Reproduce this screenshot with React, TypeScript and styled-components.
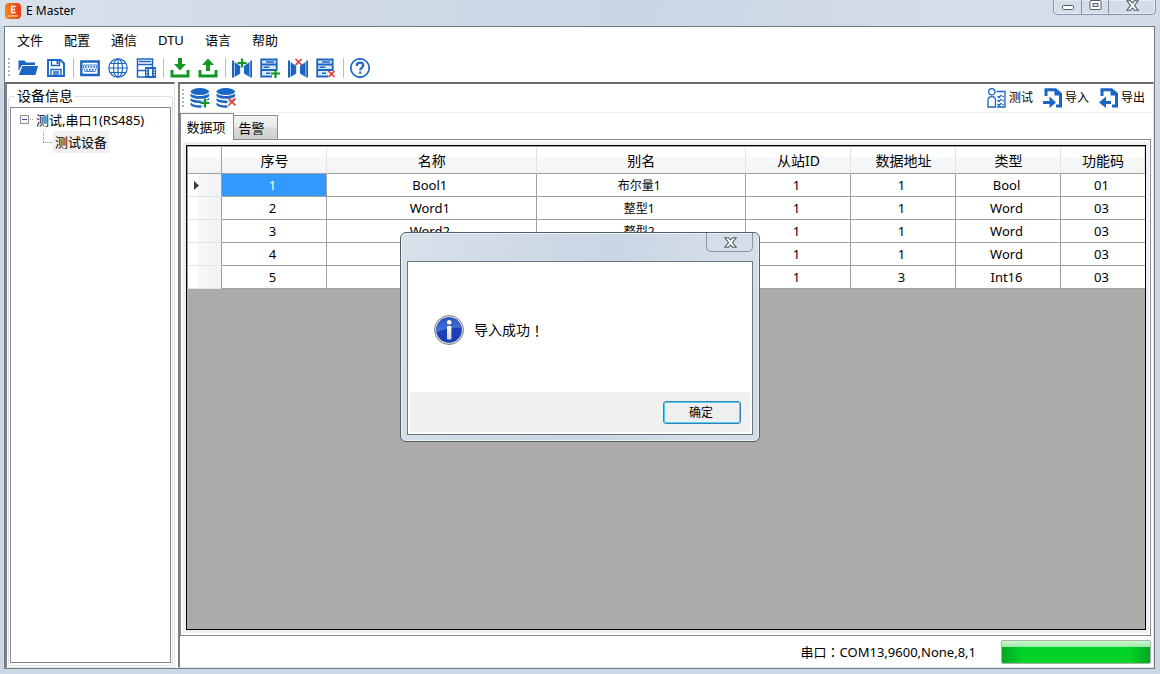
import React from 'react';
import styled, { createGlobalStyle, css } from 'styled-components';

const Global = createGlobalStyle`
  *, *::before, *::after { box-sizing: border-box; }
  body { margin: 0; font: 13px/20px "Noto Sans", "Noto Sans CJK SC", sans-serif; color: #000; }
  button { font: inherit; color: inherit; border: 0; background: none; padding: 0; margin: 0; white-space: nowrap; }
  svg { display: block; }
`;

const BLUE = '#1b66c4';
const GREEN = '#119822';
const RED = '#e8352e';
const GLASS = 'linear-gradient(100deg, #d9e1eb 0%, #cfdae6 30%, #c9d6e4 55%, #d6dee9 85%, #d3dce8 100%)';

const Window = styled.div`
  display: flex;
  flex-direction: column;
  height: 100vh;
  min-height: 480px;
  padding: 0 5px 5px 4px;
  background: #cbd8e6;
`;

const TitleBar = styled.header`
  display: flex;
  flex: none;
  align-items: flex-start;
  height: 26px;
  margin: 0 -5px 0 -4px;
  padding: 0 4px 0 5px;
  background: ${GLASS};
`;

const Title = styled.h1`
  display: flex;
  align-items: center;
  gap: 5px;
  margin: 0;
  font-size: 12px;
  line-height: 22px;
  font-weight: 400;
`;

const WindowButtons = styled.div`
  display: flex;
  margin-left: auto;
  height: 15px;
  border: 1px solid #8a94a3;
  border-top: 0;
  border-radius: 0 0 5px 5px;
  box-shadow: inset 0 0 0 1px #e6ecf3;
`;

const WindowButton = styled.button<{ $wide?: boolean }>`
  display: flex;
  justify-content: center;
  width: ${p => (p.$wide ? 47 : 27)}px;
  & + & { border-left: 1px solid #8a94a3; }
`;

const Client = styled.div`
  display: flex;
  flex-direction: column;
  flex: 1;
  min-height: 0;
  background: #fff;
  border: 1px solid #737b86;
`;

const MenuBar = styled.nav`
  display: flex;
  flex: none;
  gap: 21px;
  height: 26px;
  padding: 0 12px;
  align-items: center;
`;

const ToolStrip = styled.div<{ $compact?: boolean }>`
  display: flex;
  flex: none;
  align-items: center;
  height: ${p => (p.$compact ? 28 : 29)}px;
  padding: 0 ${p => (p.$compact ? 2 : 3)}px;
`;

const Grip = styled.span<{ $tight?: boolean }>`
  width: 2px;
  height: 19px;
  margin-right: ${p => (p.$tight ? 3 : 4)}px;
  background: repeating-linear-gradient(#b5b5b5 0 2px, #fff 2px 4px);
`;

const ToolButton = styled.button<{ $width?: number }>`
  display: grid;
  place-items: center;
  width: ${p => p.$width ?? 28}px;
  height: 24px;
`;

const TextToolButton = styled.button`
  display: flex;
  align-items: center;
  gap: 2px;
  padding: 0 6px 0 4px;
  font-size: 12px;
`;

const Spacer = styled.span`
  flex: 1;
`;

const Separator = styled.span`
  width: 1px;
  height: 20px;
  margin: 0 2px 0 3px;
  background: #bdbdbd;
`;

const Body = styled.main`
  display: flex;
  flex: 1;
  gap: 3px;
  min-height: 0;
`;

const sunken = css`
  border: 2px solid #696969;
  border-left-color: #808080;
  border-right: 1px solid #e3e3e3;
  border-bottom: 1px solid #e3e3e3;
`;

const SidePane = styled.aside`
  ${sunken}
  flex: none;
  width: 170px;
  display: flex;
  padding: 2px 1px 1px;
`;

const Group = styled.fieldset`
  flex: 1;
  display: flex;
  min-width: 0;
  margin: 0;
  padding: 1px 1px 2px;
  border: 1px solid #dce0e6;
  border-radius: 3px;
`;

const Legend = styled.legend`
  margin-left: 5px;
  padding: 0 2px;
  font-size: 14px;
  line-height: 20px;
`;

const Tree = styled.ul`
  flex: 1;
  margin: 0;
  padding: 1px 0 0 9px;
  list-style: none;
  border: 1px solid #828790;
`;

const TreeRow = styled.div`
  display: flex;
  align-items: center;
  height: 22px;
`;

const SubTree = styled.ul`
  margin: 0;
  padding: 0 0 0 23px;
  list-style: none;
`;

const Expander = styled.button`
  display: flex;
`;

const NodeText = styled.span<{ $selected?: boolean }>`
  padding: 0 2px;
  line-height: 22px;
  background: ${p => (p.$selected ? '#f0f0f0' : 'none')};
`;

const DataPane = styled.section`
  ${sunken}
  flex: 1;
  min-width: 0;
  display: flex;
  flex-direction: column;
`;

const Tabs = styled.div`
  display: flex;
  flex: none;
  align-items: flex-end;
  height: 27px;
  border-top: 1px solid #f0f0f0;
`;

const Tab = styled.button<{ $active?: boolean }>`
  width: ${p => (p.$active ? 54 : 44)}px;
  height: ${p => (p.$active ? 27 : 24)}px;
  margin-bottom: ${p => (p.$active ? -1 : 0)}px;
  padding-right: ${p => (p.$active ? 2 : 8)}px;
  border: 1px solid #8b8b97;
  border-bottom: 0;
  border-left-width: ${p => (p.$active ? 1 : 0)}px;
  background: ${p => (p.$active ? '#fff' : 'linear-gradient(#f2f2f2, #ebebeb 48%, #dadada 52%, #cfcfcf)')};
  z-index: 1;
`;

const TabPage = styled.div`
  display: flex;
  flex: 1;
  min-height: 0;
  margin-right: 2px;
  padding: 2px 1px 2px 2px;
  border: 1px solid #8b8b97;
`;

const PageInner = styled.div`
  display: flex;
  flex: 1;
  min-width: 0;
  padding: 3px;
  background: #f0f0f0;
`;

const GridHost = styled.div`
  flex: 1;
  min-width: 0;
  overflow: hidden;
  border: 1px solid #000;
  background: #ababab;
`;

const DataTable = styled.table`
  width: 100%;
  table-layout: fixed;
  border-collapse: separate;
  border-spacing: 0;
  border-top: 1px solid #a0a0a0;
  border-left: 1px solid #a0a0a0;
`;

const Col = styled.col<{ $width?: number }>`
  width: ${p => (p.$width ? p.$width + 'px' : 'auto')};
`;

const HeadCell = styled.th`
  height: 27px;
  padding: 2px 0 0 1px;
  font-size: 14px;
  line-height: 20px;
  font-weight: 400;
  background: linear-gradient(#fff 0 40%, #f7f8fa 40%, #f2f3f5);
  border-bottom: 1px solid #a0a0a0;
  border-right: 1px solid #e2e3e5;
  &:first-child { border-right-color: #a0a0a0; }
`;

const RowHead = styled.th`
  height: 23px;
  padding: 0 0 0 6px;
  background: linear-gradient(90deg, #fff 30%, #f6f7f9 30%, #f2f3f5);
  border-bottom: 1px solid #e2e3e5;
  border-right: 1px solid #a0a0a0;
`;

const Cell = styled.td<{ $selected?: boolean; $cjk?: boolean }>`
  height: 23px;
  padding: ${p => (p.$cjk ? 1 : 0)}px 3px 0 0;
  text-align: center;
  font-size: ${p => (p.$cjk ? 12 : 13)}px;
  line-height: 20px;
  color: ${p => (p.$selected ? '#fff' : '#000')};
  background: ${p => (p.$selected ? '#3399ff' : '#fff')};
  border-right: 1px solid #a0a0a0;
  border-bottom: 1px solid #a0a0a0;
  &:last-child { border-right: 0; }
`;

const StatusBar = styled.footer`
  display: flex;
  flex: none;
  align-items: center;
  justify-content: flex-end;
  gap: 25px;
  height: 31px;
  padding: 1px 2px 0 0;
`;

const FullWidthMark = styled.span`
  font-family: "Noto Sans CJK TC", sans-serif;
`;

const Progress = styled.progress`
  appearance: none;
  width: 150px;
  height: 24px;
  border: 1px solid #a6b3a6;
  border-radius: 2px;
  overflow: hidden;
  &::-webkit-progress-bar { background: #e6e6e6; }
  &::-webkit-progress-value {
    background:
      linear-gradient(#cdf7d0 0, #9cebaa 27%, transparent 27%),
      linear-gradient(90deg, #03a724, #02d328 14%, #02d328 86%, #03a724);
  }
`;

const Overlay = styled.div`
  position: fixed;
  inset: 0;
  display: grid;
  place-items: center;
`;

const Dialog = styled.div`
  display: flex;
  flex-direction: column;
  width: 360px;
  padding: 0 6px 6px;
  border: 1px solid #555d66;
  border-radius: 6px;
  background: ${GLASS};
  box-shadow: inset 0 0 0 1px #eaf0f6;
`;

const DialogTitle = styled.div`
  display: flex;
  justify-content: flex-end;
  height: 28px;
`;

const DialogClose = styled.button`
  display: flex;
  justify-content: center;
  padding: 4px 0 0 1px;
  width: 47px;
  height: 19px;
  border: 1px solid #8a94a3;
  border-top: 0;
  border-radius: 0 0 5px 5px;
`;

const DialogBody = styled.div`
  padding: 0 2px 2px;
  background: #fff;
  border: 1px solid #6d7681;
`;

const Message = styled.p`
  display: flex;
  align-items: center;
  height: 130px;
  margin: 0;
  padding: 6px 0 0 23px;
  font-size: 14px;
  svg { margin-right: 9px; }
`;

const DialogFooter = styled.div`
  display: flex;
  justify-content: flex-end;
  align-items: center;
  height: 40px;
  padding-right: 9px;
  background: #f0f0f0;
`;

const OkButton = styled.button`
  width: 78px;
  height: 23px;
  padding: 1px 2px 0 0;
  font-size: 12px;
  border: 1px solid #3c7fb1;
  border-radius: 3px;
  background: #efefef;
  box-shadow: inset 0 0 0 1px #48d1f5;
`;

const Icon = ({ children }: { children: React.ReactNode }) => (
  <svg width="20" height="20" viewBox="0 0 20 20" fill="none" stroke={BLUE} strokeWidth="1.6" aria-hidden="true">
    {children}
  </svg>
);

const Plus = ({ x, y }: { x: number; y: number }) => (
  <path d={`M${x - 4.5} ${y}h9M${x} ${y - 4.5}v9`} stroke={GREEN} strokeWidth="2.2" />
);
const Cross = ({ x, y, r = 3 }: { x: number; y: number; r?: number }) => (
  <path d={`M${x - r} ${y - r}l${r * 2} ${r * 2}m0 ${-r * 2}l${-r * 2} ${r * 2}`} stroke={RED} strokeWidth="1.7" />
);

const FolderIcon = () => (
  <Icon>
    <path d="M.5 2.5h6l1.5 2h9v2.5H4L.5 13z" fill={BLUE} stroke="none" />
    <path d="M4.5 8H20l-2.5 9H.8z" fill={BLUE} stroke="none" />
    <path d="M4 7.5h14" stroke="#fff" strokeWidth="1" />
  </Icon>
);
const SaveIcon = () => (
  <Icon>
    <path d="M2 2h12.5L18 5.5V18H2z" strokeWidth="1.9" />
    <path d="M5.5 2v5.5h8V2M5 18v-6.500h10V18M7 14h6M7 16h6" strokeWidth="1.4" />
    <path d="M11.5 3v3" strokeWidth="2" />
  </Icon>
);
const SerialIcon = () => (
  <Icon>
    <path d="M1.3 3.5h17.400v13.500H1.300z" strokeWidth="2.400" />
    <path d="M3.500 7h13v2.500L15 13.500H5L3.500 9.500z" fill="#e9f1fb" strokeWidth=".8" />
    <path d="M5 9h10.500" strokeDasharray="1.600 1.200" strokeWidth="1.400" />
    <path d="M6.200 11.800h8" strokeDasharray="1.600 1.200" strokeWidth="1.400" />
  </Icon>
);
const GlobeIcon = () => (
  <Icon>
    <g strokeWidth="1.200">
      <circle cx="10" cy="10" r="9.200" />
      <ellipse cx="10" cy="10" rx="4.500" ry="9.200" />
      <path d="M10 1v18M1 10h18M2.500 5.500h15M2.500 14.500h15" />
    </g>
  </Icon>
);
const ServerIcon = () => (
  <Icon>
    <path d="M1.500 1h15v5.500h-15zM9 12.500H1.500v-6h15V9M1.500 12.500V19H9" strokeWidth="1.500" />
    <path d="M3 3.500h12" strokeWidth="1.500" />
    <path d="M9 9h11v11H9z" fill={BLUE} stroke="none" />
    <path d="M13 11h3v7h-3z" fill="#fff" stroke="none" />
    <path d="M10.800 11v7M18.300 11v7" stroke="#fff" strokeDasharray="1.500 1" strokeWidth="1.200" />
  </Icon>
);
const DownloadIcon = () => (
  <Icon>
    <path d="M2 12v6h16v-6" stroke={GREEN} strokeWidth="3" />
    <path d="M8 0h4v6h4l-6 6.500L4 6h4z" fill={GREEN} stroke="none" />
  </Icon>
);
const UploadIcon = () => (
  <Icon>
    <path d="M2 12v6h16v-6" stroke={GREEN} strokeWidth="3" />
    <path d="M8 13h4V7h4l-6-6.500L4 7h4z" fill={GREEN} stroke="none" />
  </Icon>
);
const LinkIcon = ({ children }: { children: React.ReactNode }) => (
  <Icon>
    <path d="M1 2.500v17M19.200 2.500v17" strokeWidth="2" />
    <path d="M2.600 4l5.600 4v7.500l-5.600 3.500zM17.600 4L12 8v7.500l5.600 3.500z" fill={BLUE} stroke="none" />
    {children}
  </Icon>
);
const RackIcon = ({ children }: { children: React.ReactNode }) => (
  <Icon>
    <path d="M1.200 1.500h15.500v5H1.200zM1.200 6.500h15.500V12H1.200zM12 18.500H1.200V12h12" fill="#dbe8f8" strokeWidth="1.800" />
    <path d="M6 4h8M3.500 9.300h6M6 15.200h4" strokeWidth="1.400" />
    {children}
  </Icon>
);
const HelpIcon = () => (
  <Icon>
    <circle cx="10" cy="10" r="9.200" strokeWidth="1.700" />
    <path d="M6.800 8c0-2 1.400-3.300 3.300-3.300S13.200 6 13.200 7.600c0 2.100-3 2.300-3 4.600" strokeWidth="2.200" />
    <path d="M9.100 13.500h2.200v2.200H9.100z" fill={BLUE} stroke="none" />
  </Icon>
);
const DatabaseIcon = ({ children }: { children: React.ReactNode }) => (
  <Icon>
    <ellipse cx="9.800" cy="3.600" rx="9.300" ry="3.500" fill={BLUE} stroke="none" />
    <path
      d="M.5 5.500c2.500 3.300 16 3.300 18.600 0v2.700c-2.500 3.500-16 3.500-18.600 0zM.5 10c2.500 3.300 16 3.300 18.600 0v2.500c-2.500 3.500-16 3.500-18.600 0zM.5 14.400c2 2.600 8 3.200 12.500 2.600v2.400C8 20 2.500 19.500.5 17z"
      fill={BLUE}
      stroke="none"
    />
    <path d="M11 12h9v8h-9z" fill="#fff" fillOpacity=".7" stroke="none" />
    {children}
  </Icon>
);
const TestIcon = () => (
  <Icon>
    <g strokeWidth="1.300">
      <circle cx="4.800" cy="3.800" r="3.200" />
      <path d="M1 19v-7c0-4.500 7.500-4.500 7.500 0v7zM9.500 3.500H18V19h-8" />
      <path d="M10.500 8l1.500 1.500L14.500 7M10.500 12l1.500 1.500 2.500-2.500M10.500 16l1.500 1.500 2.500-2.500M15.300 8.500h1.500M15.300 12.500h1.500M15.300 16.500h1.500" />
    </g>
  </Icon>
);
const PageOutline = () => (
  <>
    <path d="M3 8V1.800h9.500L17.500 6v12H13" strokeWidth="3" />
    <path d="M11.500 1v6.500H18z" fill={BLUE} stroke="none" />
  </>
);
const ImportIcon = () => (
  <Icon>
    <PageOutline />
    <path d="M0 13h6.500V8.500l6.500 6-6.500 5.500v-4H0z" fill={BLUE} stroke="none" />
  </Icon>
);
const ExportIcon = () => (
  <Icon>
    <PageOutline />
    <path d="M12 13H7V8.500L0 14.500 7 20v-4h5z" fill={BLUE} stroke="none" />
  </Icon>
);

const AppIcon = () => (
  <svg width="16" height="18" viewBox="0 0 16 18" aria-hidden="true">
    <defs>
      <linearGradient id="app-badge" x1="0" x2="1">
        <stop offset="0" stopColor="#f08416" />
        <stop offset="1" stopColor="#e8391f" />
      </linearGradient>
    </defs>
    <rect y="1" width="16" height="16" rx="4" fill="url(#app-badge)" />
    <path d="M10.500 4.500h-4v6h4M6.500 7.500h3.500" fill="none" stroke="#fff" strokeWidth="1.300" />
    <path d="M2.500 14h11" stroke="#fff" strokeWidth="1.600" strokeDasharray="1.300 .5" opacity=".85" />
  </svg>
);

const CloseGlyph = () => (
  <svg width="13" height="11" viewBox="0 0 13 11" aria-hidden="true">
    <path d="M1 .8h3.500l2 2.200 2-2.200H12L8.500 5.500 12 10.200H8.500l-2-2.200-2 2.200H1l3.500-4.700z" fill="#fff" stroke="#545b68" strokeWidth="1.100" />
  </svg>
);
const MinimizeGlyph = () => (
  <svg width="14" height="11" viewBox="0 0 14 11" aria-hidden="true">
    <rect x="1.500" y="5.500" width="11" height="4" rx="1" fill="#fff" stroke="#545b68" />
  </svg>
);
const RestoreGlyph = () => (
  <svg width="13" height="11" viewBox="0 0 13 11" aria-hidden="true">
    <rect x="1" y=".5" width="11" height="9" rx="1" fill="#fff" stroke="#545b68" />
    <rect x="4" y="3.500" width="5" height="3" fill="#dbe3ec" stroke="#545b68" />
  </svg>
);

const InfoIcon = () => (
  <svg width="32" height="32" viewBox="0 0 32 32" aria-hidden="true">
    <defs>
      <linearGradient id="info-top" x1="0" y1="0" x2="0" y2="1">
        <stop offset="0" stopColor="#2a50c0" />
        <stop offset="1" stopColor="#4a7bdc" />
      </linearGradient>
      <linearGradient id="info-stem" x1="0" y1="0" x2="0" y2="1">
        <stop offset="0" stopColor="#fff" />
        <stop offset="1" stopColor="#d5d5da" />
      </linearGradient>
    </defs>
    <circle cx="16" cy="16" r="14.500" fill="#dcdcdc" stroke="#858585" />
    <circle cx="16" cy="16" r="12.800" fill="#1a3fb8" />
    <path d="M3.200 16a12.800 12.800 0 0 1 25.400-2C20 13 10 15 3.300 18.500z" fill="url(#info-top)" />
    <circle cx="16.200" cy="8.200" r="2.300" fill="#fff" />
    <rect x="14" y="12" width="4.400" height="13.500" rx="1" fill="url(#info-stem)" />
  </svg>
);

const menus = ['文件', '配置', '通信', 'DTU', '语言', '帮助'];

const toolGroups: [string, React.ReactNode][][] = [
  [['打开', <FolderIcon />], ['保存', <SaveIcon />]],
  [['串口', <SerialIcon />], ['网络', <GlobeIcon />], ['服务器', <ServerIcon />]],
  [['下载', <DownloadIcon />], ['上传', <UploadIcon />]],
  [
    ['添加通道', <LinkIcon><Plus x={10} y={5} /></LinkIcon>],
    ['添加设备', <RackIcon><Plus x={15.5} y={15.5} /></RackIcon>],
    ['删除通道', <LinkIcon><Cross x={10.5} y={4} /></LinkIcon>],
    ['删除设备', <RackIcon><Cross x={15.5} y={16} /></RackIcon>],
  ],
  [['帮助', <HelpIcon />]],
];

const columns: { title: string; width?: number }[] = [
  { title: '序号', width: 105 },
  { title: '名称' },
  { title: '别名' },
  { title: '从站ID', width: 105 },
  { title: '数据地址', width: 105 },
  { title: '类型', width: 105 },
  { title: '功能码', width: 84 },
];

const rows = [
  ['1', 'Bool1', '布尔量1', '1', '1', 'Bool', '01'],
  ['2', 'Word1', '整型1', '1', '1', 'Word', '03'],
  ['3', 'Word2', '整型2', '1', '1', 'Word', '03'],
  ['4', 'Word3', '整型3', '1', '1', 'Word', '03'],
  ['5', 'Int1', '整型4', '1', '3', 'Int16', '03'],
];

export default function App() {
  return (
    <>
      <Global />
      <Window>
        <TitleBar>
          <Title><AppIcon />E Master</Title>
          <WindowButtons>
            <WindowButton aria-label="最小化"><MinimizeGlyph /></WindowButton>
            <WindowButton aria-label="还原"><RestoreGlyph /></WindowButton>
            <WindowButton aria-label="关闭" $wide><CloseGlyph /></WindowButton>
          </WindowButtons>
        </TitleBar>
        <Client>
          <MenuBar>
            {menus.map(m => <button key={m}>{m}</button>)}
          </MenuBar>
          <ToolStrip>
            <Grip />
            {toolGroups.map((group, i) => (
              <React.Fragment key={i}>
                {i > 0 && <Separator />}
                {group.map(([label, icon]) => (
                  <ToolButton key={label} aria-label={label}>{icon}</ToolButton>
                ))}
              </React.Fragment>
            ))}
          </ToolStrip>
          <Body>
            <SidePane>
              <Group>
                <Legend>设备信息</Legend>
                <Tree>
                  <li>
                    <TreeRow>
                      <Expander aria-label="折叠">
                        <svg width="14" height="10" viewBox="0 0 14 10">
                          <rect x=".5" y=".5" width="8" height="8" fill="#f6f6f6" stroke="#919191" />
                          <path d="M2 4.500h5" stroke="#3b4fa0" />
                          <path d="M10 4.500h4" stroke="#a0a0a0" strokeDasharray="1 1" />
                        </svg>
                      </Expander>
                      <NodeText>测试,串口1(RS485)</NodeText>
                    </TreeRow>
                    <SubTree>
                      <li>
                        <TreeRow>
                          <svg width="10" height="22" viewBox="0 0 10 22" aria-hidden="true">
                            <path d="M.5 0v11M0 11.500h10" fill="none" stroke="#909090" strokeDasharray="1 1" />
                          </svg>
                          <NodeText $selected>测试设备</NodeText>
                        </TreeRow>
                      </li>
                    </SubTree>
                  </li>
                </Tree>
              </Group>
            </SidePane>
            <DataPane>
              <ToolStrip $compact>
                <Grip $tight />
                <ToolButton $width={26} aria-label="添加数据项"><DatabaseIcon><Plus x={15} y={15} /></DatabaseIcon></ToolButton>
                <ToolButton $width={26} aria-label="删除数据项"><DatabaseIcon><Cross x={16} y={14} r={3.5} /></DatabaseIcon></ToolButton>
                <Spacer />
                <TextToolButton><TestIcon />测试</TextToolButton>
                <TextToolButton><ImportIcon />导入</TextToolButton>
                <TextToolButton><ExportIcon />导出</TextToolButton>
              </ToolStrip>
              <Tabs role="tablist">
                <Tab role="tab" aria-selected="true" $active>数据项</Tab>
                <Tab role="tab" aria-selected="false">告警</Tab>
              </Tabs>
              <TabPage role="tabpanel">
                <PageInner>
                  <GridHost>
                    <DataTable>
                      <colgroup>
                        <Col $width={34} />
                        {columns.map(c => <Col key={c.title} $width={c.width} />)}
                      </colgroup>
                      <thead>
                        <tr>
                          <HeadCell aria-label="行" />
                          {columns.map(c => <HeadCell key={c.title} scope="col">{c.title}</HeadCell>)}
                        </tr>
                      </thead>
                      <tbody>
                        {rows.map((row, r) => (
                          <tr key={row[0]}>
                            <RowHead scope="row" aria-label={row[0]}>
                              {r === 0 && (
                                <svg width="5" height="9" viewBox="0 0 5 9" aria-hidden="true">
                                  <path d="M0 0l5 4.500L0 9z" fill="#3c3c3c" />
                                </svg>
                              )}
                            </RowHead>
                            {row.map((value, c) => (
                              <Cell key={c} $selected={r === 0 && c === 0} $cjk={c === 2}>{value}</Cell>
                            ))}
                          </tr>
                        ))}
                      </tbody>
                    </DataTable>
                  </GridHost>
                </PageInner>
              </TabPage>
              <StatusBar>
                <span>串口<FullWidthMark>：</FullWidthMark>COM13,9600,None,8,1</span>
                <Progress value={100} max={100} aria-label="进度" />
              </StatusBar>
            </DataPane>
          </Body>
        </Client>
      </Window>
      <Overlay>
        <Dialog role="dialog" aria-modal="true" aria-label="提示">
          <DialogTitle>
            <DialogClose aria-label="关闭"><CloseGlyph /></DialogClose>
          </DialogTitle>
          <DialogBody>
            <Message><InfoIcon />导入成功<FullWidthMark>！</FullWidthMark></Message>
            <DialogFooter>
              <OkButton>确定</OkButton>
            </DialogFooter>
          </DialogBody>
        </Dialog>
      </Overlay>
    </>
  );
}
